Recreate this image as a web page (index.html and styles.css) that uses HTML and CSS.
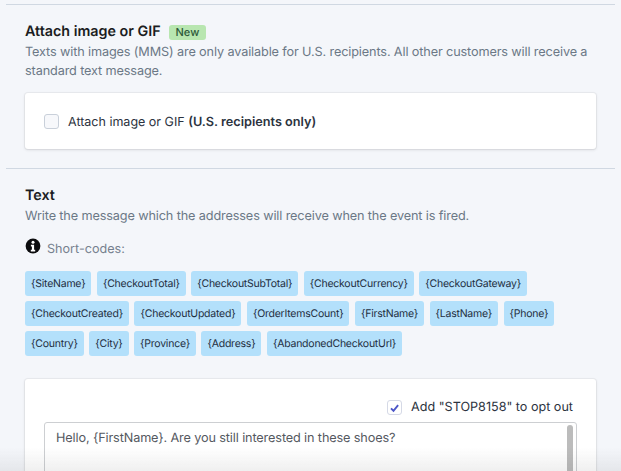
FILE: index.html
```html
<!DOCTYPE html>
<html lang="en">
<head>
<meta charset="utf-8">
<title>Abandoned checkout text</title>
<link rel="stylesheet" href="styles.css">
</head>
<body>
<main class="page">
  <section class="section section-mms">
    <h2 class="title">Attach image or GIF <span class="badge">New</span></h2>
    <p class="desc">Texts with images (MMS) are only available for U.S. recipients. All other customers will receive a standard text message.</p>
    <div class="card card-attach">
      <span class="box"></span>
      <span class="attach-label">Attach image or GIF <b>(U.S. recipients only)</b></span>
    </div>
  </section>
  <section class="section section-text">
    <h2 class="title">Text</h2>
    <p class="desc">Write the message which the addresses will receive when the event is fired.</p>
    <div class="codes-head">
      <svg class="info" viewBox="0 0 16 16" width="16" height="16" aria-hidden="true"><circle cx="8" cy="8" r="7.4" fill="#0c0c0e"/><circle cx="8" cy="4.2" r="1.5" fill="#fff"/><path d="M5.900 6.800h3.200v5h1.100v1.600H5.800v-1.600h1.100V8.400H5.900z" fill="#fff"/></svg>
      <span>Short-codes:</span>
    </div>
    <div class="chips">
      <span class="chip">{SiteName}</span><span class="chip">{CheckoutTotal}</span><span class="chip">{CheckoutSubTotal}</span><span class="chip">{CheckoutCurrency}</span><span class="chip">{CheckoutGateway}</span>
      <span class="chip">{CheckoutCreated}</span><span class="chip">{CheckoutUpdated}</span><span class="chip">{OrderItemsCount}</span><span class="chip">{FirstName}</span><span class="chip">{LastName}</span><span class="chip">{Phone}</span>
      <span class="chip">{Country}</span><span class="chip">{City}</span><span class="chip">{Province}</span><span class="chip">{Address}</span><span class="chip">{AbandonedCheckoutUrl}</span>
    </div>
    <div class="card card-message">
      <div class="optout">
        <span class="box box-on"><svg viewBox="0 0 14 14" width="14" height="14" aria-hidden="true"><path d="M3.200 7.400 5.900 10 10.900 3.900" fill="none" stroke="#4c56c8" stroke-width="2"/></svg></span>
        <span>Add "STOP8158" to opt out</span>
      </div>
      <div class="textarea">
        <p>Hello, {FirstName}. Are you still interested in these shoes?</p>
        <p>Thinking it's time to purchase. Purchase now to get free shipping.</p>
        <span class="scroll"></span>
      </div>
    </div>
  </section>
</main>
<div class="fade"></div>
</body>
</html>
```
FILE: styles.css
```css
* { box-sizing: border-box; }
html, body { margin: 0; height: 471px; overflow: hidden; }
body {
  background: #f4f6fa;
  font-family: Inter, "Liberation Sans", sans-serif;
  color: #20242b;
  text-rendering: geometricPrecision;
}
.page { padding: 4px 6px 0; }
.section { border-top: 1px solid #d0d8e2; padding: 0 19px; }
.section-mms { height: 164px; padding-top: 17px; }
.section-text { padding-top: 17px; }
.title { margin: 0; font-size: 14.300px; line-height: 20px; font-weight: 600; color: #1b1d22; display: flex; align-items: center; gap: 8px; }
.badge { background: #b8e6b0; color: #2e5a3a; font-size: 11px; font-weight: 500; line-height: 15px; padding: 0 7px; border-radius: 3px; }
.desc { margin: 1px 0 0; font-size: 12.700px; line-height: 19px; letter-spacing: -0.130px; color: #6b7886; }
.card { background: #fff; border-radius: 3px; box-shadow: 0 0 0 1px rgba(63,63,68,.05), 0 1px 3px rgba(63,63,68,.15); }
.card-attach { margin-top: 12px; height: 56px; display: flex; align-items: center; gap: 9px; padding: 0 19px; font-size: 12.500px; color: #2c3340; }
.attach-label { padding-top: 2px; }
.attach-label b { font-weight: 600; font-size: 12.700px; }
.box { width: 15px; height: 15px; flex: none; border: 1px solid #c9d0da; border-radius: 3px; background: #f7f8fb; display: flex; align-items: center; justify-content: center; }
.box-on { border-color: #d5d9e6; background: #fff; }
.codes-head { margin-top: 14px; display: flex; align-items: center; gap: 6px; font-size: 12.600px; line-height: 20px; color: #76818e; }
.info { flex: none; margin-top: -8px; }
.chips { margin-top: 11px; display: flex; flex-wrap: wrap; gap: 5.500px; width: 535px; }
.chip { background: #b3e0fb; color: #1f2f42; font-size: 10.500px; letter-spacing: -0.230px; line-height: 26px; height: 24.500px; padding: 0 6px; border-radius: 3px; }
.card-message { margin-top: 23px; padding: 20px 19px 0; height: 110px; }
.optout { display: flex; justify-content: flex-end; align-items: center; gap: 9px; padding-right: 4px; height: 18px; font-size: 12.600px; color: #2c3340; }
.textarea { position: relative; margin-top: 5px; height: 70px; border: 1px solid #cdcfd2; border-radius: 3px; padding: 6px 11px; font-size: 12.700px; letter-spacing: -0.130px; line-height: 20px; color: #55595f; }
.textarea p { margin: 0 0 19px; }
.scroll { position: absolute; top: 2px; right: 3px; width: 6px; height: 60px; border-radius: 3px; background: #bcbcbc; }
.fade { position: fixed; left: 0; right: 0; bottom: 0; height: 24px; background: linear-gradient(rgba(60,60,60,0), rgba(60,60,60,.08)); pointer-events: none; }
```
